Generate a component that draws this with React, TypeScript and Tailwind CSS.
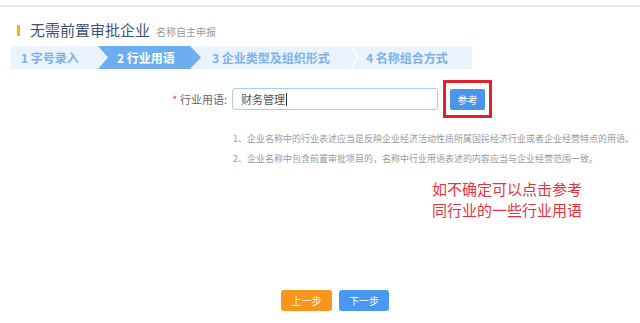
import React from "react";

const font = { fontFamily: '"Noto Sans CJK SC", "Noto Sans", sans-serif' };

type Step = { n: number; label: string; w: string; active?: boolean };

const steps: Step[] = [
  { n: 1, label: "字号录入", w: "w-[87px]" },
  { n: 2, label: "行业用语", w: "w-[103px]", active: true },
  { n: 3, label: "企业类型及组织形式", w: "w-[155px]" },
  { n: 4, label: "名称组合方式", w: "w-[116px]" },
];

function Chevron() {
  return (
    <svg width="10" height="23" viewBox="0 0 10 23" className="absolute right-[-4px] top-0">
      <polyline points="1,0 8,11.5 1,23" fill="none" stroke="#ffffff" strokeWidth="1.2" />
    </svg>
  );
}

export default function App() {
  return (
    <div className="h-[323px] w-[640px] overflow-hidden bg-white" style={font}>
      <div className="mt-[5px] border-t-2 border-[#e8e9eb]" />

      {/* title */}
      <div className="mt-[11px] flex items-center pl-[17px]">
        <span className="h-[11px] w-[3px] bg-[#f5b800]" />
        <span className="ml-[10px] text-[15px] leading-[24px] text-[#3e5275]">无需前置审批企业</span>
        <span className="ml-[6px] mt-[3px] text-[10px] text-[#9a9a9a]">名称自主申报</span>
      </div>

      {/* steps */}
      <div className="ml-[11px] mt-[4px] flex h-[23px] w-[461px] bg-[#e8f3fe]">
        {steps.map((s) => (
          <div key={s.n} className={`relative flex h-full shrink-0 items-center ${s.w}`}>
            {s.active ? (
              <div className="absolute left-0 top-0 h-full w-[113px] bg-[#6daef0] [clip-path:polygon(0_0,92px_0,103px_50%,92px_100%,0_100%,10px_50%)]" />
            ) : null}
            <span
              className={`relative whitespace-nowrap text-[12px] font-bold ${
                s.active ? "pl-[19px] text-white" : s.n === 1 ? "pl-[10px] text-[#7eb1e6]" : s.n === 3 ? "pl-[11px] text-[#7eb1e6]" : "pl-[10px] text-[#7eb1e6]"
              }`}
            >
              {s.n} {s.label}
            </span>
            {s.n === 3 ? <Chevron /> : null}
          </div>
        ))}
      </div>

      {/* form row */}
      <div className="mt-[11px] flex items-center">
        <div className="w-[232px] pr-[5px] text-right text-[11px] text-[#666]">
          <span className="text-[#e8473c]">*</span> 行业用语:
        </div>
        <div className="flex h-[22px] w-[206px] items-center rounded-[3px] border border-[#a9cdf2] px-[8px] text-[11px] text-[#555]">
          财务管理<span className="ml-[1px] h-[13px] w-px bg-[#333]" />
        </div>
        <div className="ml-[5px] flex h-[38px] w-[49px] items-center justify-center border-[3px] border-[#e0202a]">
          <button className="h-[21px] w-[35px] rounded-[2px] bg-[#4a94ea] text-[10px] text-white">参考</button>
        </div>
      </div>

      {/* notes */}
      <div className="ml-[233px] mt-[11px] whitespace-nowrap text-[9px] leading-[20px] text-[#9a9a9a]">
        <p>1、企业名称中的行业表述应当是反映企业经济活动性质所属国民经济行业或者企业经营特点的用语。</p>
        <p>2、企业名称中包含前置审批项目的，名称中行业用语表述的内容应当与企业经营范围一致。</p>
      </div>

      {/* annotation */}
      <div className="ml-[432px] mt-[9px] text-[15px] leading-[21px] text-[#e8313b]">
        <p>如不确定可以点击参考</p>
        <p>同行业的一些行业用语</p>
      </div>

      {/* buttons */}
      <div className="ml-[281px] mt-[70px] flex gap-[7px]">
        <button className="h-[21px] w-[51px] rounded-[3px] bg-[#f7951e] text-[10px] text-white">上一步</button>
        <button className="h-[21px] w-[50px] rounded-[3px] bg-[#4897f0] text-[10px] text-white">下一步</button>
      </div>
    </div>
  );
}
